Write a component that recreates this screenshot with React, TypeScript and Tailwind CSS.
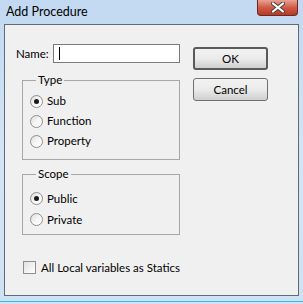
import React from "react";

function Radio({ label, checked }: { label: string; checked?: boolean }) {
  return (
    <div className="flex items-center h-full">
      <span className="w-[13px] h-[13px] rounded-full border border-[#8e8f8f] bg-gradient-to-br from-[#dcdcdc] via-[#f6f6f6] to-white flex items-center justify-center">
        {checked && <span className="w-[5px] h-[5px] rounded-full bg-[#1a1a1a]" />}
      </span>
      <span className="ml-[4px]">{label}</span>
    </div>
  );
}

function Group({ title, children, className }: { title: string; children: React.ReactNode; className?: string }) {
  return (
    <fieldset className={"border border-[#a7a7a7] ml-[6px] w-[158px] " + (className ?? "")}>
      <legend className="ml-[6px] px-[2px] leading-[16px]">{title}</legend>
      {children}
    </fieldset>
  );
}

function Btn({ label, primary }: { label: string; primary?: boolean }) {
  return (
    <button
      className={
        "w-[75px] h-[23px] rounded-[3px] bg-gradient-to-b from-[#f2f2f2] via-[#ebebeb] to-[#cfcfcf] leading-[19px] " +
        (primary ? "border-2 border-[#5a5a5a]" : "border border-[#707070]")
      }
    >
      {label}
    </button>
  );
}

export default function App() {
  return (
    <div className="w-[303px] h-[304px] flex flex-col bg-gradient-to-b from-[#c2d9f1] via-[#d3e4f6] to-[#cfe2f4] text-[11.5px] text-black font-['Lato','Noto_Sans',sans-serif]">
      <div className="h-[24px] flex items-start justify-between pl-[6px] pr-[5px]">
        <span className="mt-[3px] text-[12.5px] leading-[18px]">Add Procedure</span>
        <div className="w-[41px] h-[16px] rounded-b-[4px] border border-t-0 border-[#6a2a22] bg-gradient-to-b from-[#e8a195] via-[#cf5a45] to-[#b63a26] flex items-center justify-center">
          <svg width="14" height="11" viewBox="0 0 14 11">
            <path d="M2 1.5 L12 9.5 M12 1.5 L2 9.5" stroke="#444" strokeWidth="4" strokeLinecap="round" />
            <path d="M2 1.5 L12 9.5 M12 1.5 L2 9.5" stroke="#fff" strokeWidth="2.2" strokeLinecap="round" />
          </svg>
        </div>
      </div>

      <div className="flex-1 mx-[4px] border border-[#5e6b78] bg-[#f0f0f0] flex">
        <div className="w-[175px] shrink-0 pl-[11px] pt-[19px] flex flex-col">
          <div className="h-[19px] flex items-center">
            <span className="w-[37px]">Name:</span>
            <div className="w-[127px] h-[19px] border border-[#7a7a7a] bg-white flex items-center pl-[5px]">
              <span className="w-px h-[13px] bg-black" />
            </div>
          </div>

          <Group title="Type" className="mt-[9px] pl-[7px] pt-[3px] pb-[8px]">
            <div className="h-[20px]"><Radio label="Sub" checked /></div>
            <div className="h-[20px]"><Radio label="Function" /></div>
            <div className="h-[20px]"><Radio label="Property" /></div>
          </Group>

          <Group title="Scope" className="mt-[6px] pl-[7px] pt-[6px] pb-[4px]">
            <div className="h-[21px]"><Radio label="Public" checked /></div>
            <div className="h-[21px]"><Radio label="Private" /></div>
          </Group>

          <div className="mt-[24px] ml-[7px] flex items-center">
            <span className="w-[13px] h-[13px] border border-[#8e8f8f] bg-gradient-to-br from-[#e2e2e2] to-white" />
            <span className="ml-[5px] whitespace-nowrap">All Local variables as Statics</span>
          </div>
        </div>

        <div className="ml-[13px] pt-[22px] flex flex-col gap-[8px]">
          <Btn label="OK" primary />
          <Btn label="Cancel" />
        </div>
      </div>

      <div className="h-[8px] flex flex-col">
        <div className="h-[5px]" />
        <div className="h-px bg-[#3cb8e8]" />
      </div>
    </div>
  );
}
